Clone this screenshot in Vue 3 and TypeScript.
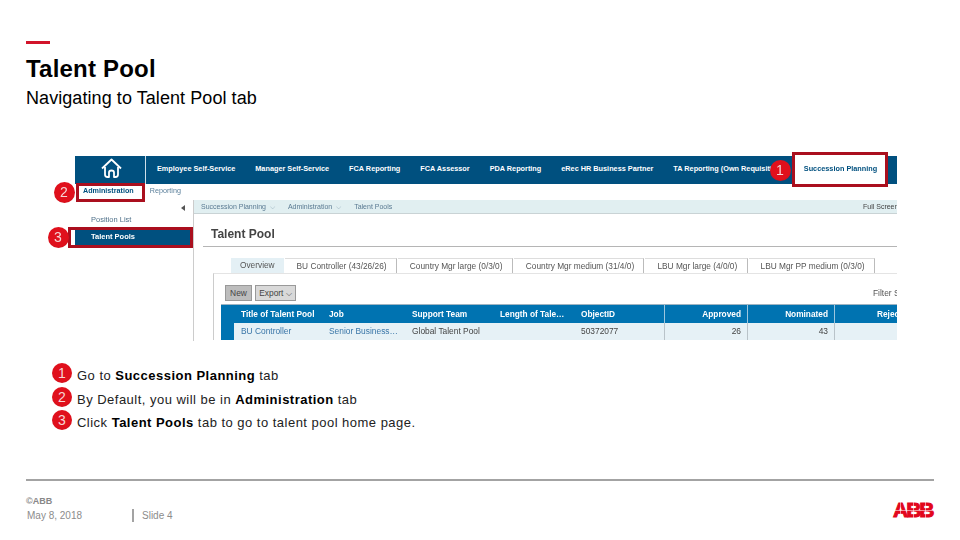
<script setup lang="ts">
const navItems: string[] = [
  'Employee Self-Service',
  'Manager Self-Service',
  'FCA Reporting',
  'FCA Assessor',
  'PDA Reporting',
  'eRec HR Business Partner',
  'TA Reporting (Own Requisiti',
]
const tabs: string[] = [
  'BU Controller (43/26/26)',
  'Country Mgr large (0/3/0)',
  'Country Mgr medium (31/4/0)',
  'LBU Mgr large (4/0/0)',
  'LBU Mgr PP medium (0/3/0)',
]
</script>

<template>
  <div class="slide">
    <header class="head">
      <div class="accent"></div>
      <h1 class="title">Talent Pool</h1>
      <p class="subtitle">Navigating to Talent Pool tab</p>
    </header>

    <section class="figure">
      <div class="shot">
        <nav class="nav">
          <div class="home">
            <svg width="21" height="20" viewBox="0 0 21 20" fill="none" stroke="#fff" stroke-width="1.8" stroke-linejoin="round">
              <path d="M1 10.5 L10.5 1.5 L20 10.5" />
              <path d="M4 9 V16.5 Q4 19 6.5 19 H8 V14.5 Q8 12.5 10.5 12.5 Q13 12.5 13 14.5 V19 H14.5 Q17 19 17 16.5 V9" />
            </svg>
          </div>
          <div class="nav-items">
            <span v-for="n in navItems" :key="n" class="nav-item">{{ n }}</span>
          </div>
          <div class="nav-active">Succession Planning</div>
        </nav>

        <div class="subnav">
          <span class="sub-active">Administration</span>
          <span class="sub-link">Reporting</span>
        </div>

        <div class="body">
          <aside class="side">
            <div class="collapse"></div>
            <div class="side-link">Position List</div>
            <div class="side-current">Talent Pools</div>
          </aside>

          <main class="content">
            <div class="crumbs">
              <span>Succession Planning &nbsp;⌵</span>
              <span>Administration &nbsp;⌵</span>
              <span>Talent Pools</span>
              <span class="full">Full Screen</span>
            </div>
            <div class="page">
              <h2 class="page-title">Talent Pool</h2>
              <div class="tabs">
                <span class="tab tab-first">Overview</span>
                <span v-for="t in tabs" :key="t" class="tab">{{ t }}</span>
              </div>
              <div class="panel">
                <div class="toolbar">
                  <span class="btn btn-new">New</span>
                  <span class="btn btn-export">Export ⌵</span>
                  <span class="filter">Filter Search</span>
                </div>
                <div class="table">
                  <div class="grid grid-head">
                    <span class="stub"></span>
                    <span>Title of Talent Pool</span>
                    <span>Job</span>
                    <span>Support Team</span>
                    <span class="len">Length of Tale…</span>
                    <span>ObjectID</span>
                    <span class="num div">Approved</span>
                    <span class="num div">Nominated</span>
                    <span class="num div rej">Rejected</span>
                  </div>
                  <div class="grid grid-row">
                    <span class="stub"></span>
                    <span class="lnk">BU Controller</span>
                    <span class="lnk">Senior Business…</span>
                    <span>Global Talent Pool</span>
                    <span></span>
                    <span>50372077</span>
                    <span class="num div">26</span>
                    <span class="num div">43</span>
                    <span class="div"></span>
                  </div>
                </div>
              </div>
            </div>
          </main>
        </div>
      </div>

      <div class="box box-1"></div>
      <div class="box box-2"></div>
      <div class="box box-3"></div>
      <span class="dot dot-1">1</span>
      <span class="dot dot-2">2</span>
      <span class="dot dot-3">3</span>
    </section>

    <ul class="legend">
      <li class="legend-row">
        <span class="dot-flow">1</span>
        <span class="legend-text">Go to <b>Succession Planning</b> tab</span>
      </li>
      <li class="legend-row">
        <span class="dot-flow">2</span>
        <span class="legend-text">By Default, you will be in <b>Administration</b> tab</span>
      </li>
      <li class="legend-row">
        <span class="dot-flow">3</span>
        <span class="legend-text">Click <b>Talent Pools</b> tab to go to talent pool home page.</span>
      </li>
    </ul>

    <footer class="foot">
      <div class="foot-left">
        <div class="copy">©ABB</div>
        <div class="foot-meta">
          <span class="date">May 8, 2018</span>
          <span class="slide-no">Slide 4</span>
        </div>
      </div>
      <div class="logo">
        <span class="logo-text">ABB</span>
        <i class="logo-h"></i>
        <i class="logo-v v1"></i>
        <i class="logo-v v2"></i>
        <i class="logo-v v3"></i>
      </div>
    </footer>
  </div>
</template>

<style>
html, body { margin: 0; background: #fff; }
</style>

<style scoped>
.slide {
  width: 960px;
  height: 540px;
  overflow: hidden;
  position: relative;
  box-sizing: border-box;
  padding: 41px 26px 0;
  font-family: "Liberation Sans", Arial, sans-serif;
  color: #000;
  background: #fff;
}
.accent { width: 24px; height: 3px; background: #d2142a; }
.title { margin: 11px 0 0; font-size: 24px; line-height: 28px; font-weight: 700; letter-spacing: 0.2px; }
.subtitle { margin: 5px 0 0; font-size: 18px; line-height: 20px; letter-spacing: 0.07px; }

.figure { position: relative; margin: 48px 0 0 49px; width: 822px; height: 185px; }
.shot {
  width: 822px; height: 185px; overflow: hidden; color: #444;
  font-size: 8px; filter: blur(0.4px);
}
.nav { height: 28px; background: #00507f; display: flex; align-items: center; color: #fff; font-weight: 700; font-size: 7.3px; }
.home { width: 70px; height: 24px; padding-bottom: 4px; border-right: 1px solid #cfdfe9; display: flex; align-items: center; justify-content: center; flex: none; }
.home svg { margin-left: 2px; }
.nav-items { display: flex; flex: none; width: 647px; padding-left: 11px; margin-top: -3px; box-sizing: border-box; overflow: hidden; white-space: nowrap; gap: 20px; }
.nav-active { background: #fff; color: #00507f; width: 95px; height: 28px; padding-bottom: 3px; box-sizing: border-box; display: flex; align-items: center; justify-content: center; flex: none; white-space: nowrap; }

.subnav { height: 16px; display: flex; align-items: flex-start; font-size: 7.2px; line-height: 14px; }
.sub-active { margin-left: 8px; color: #00507f; font-weight: 700; }
.sub-link { margin-left: 16px; color: #5a7f9a; }

.body { display: flex; height: 141px; }
.side { width: 118px; flex: none; border-right: 1px solid #ccc; font-size: 7.5px; }
.collapse { height: 14px; position: relative; }
.collapse::after { content: ""; position: absolute; right: 8px; top: 5px; border: 3px solid transparent; border-left: 0; border-right: 4px solid #555; }
.side-link { padding-left: 16px; height: 14px; line-height: 12px; color: #50718a; }
.side-current { width: 115px; height: 17px; line-height: 17px; padding-left: 16px; box-sizing: border-box; background: #00507f; color: #fff; font-weight: 700; }

.content { flex: 1; min-width: 0; }
.crumbs { height: 13px; background: #e1eff1; border-bottom: 1px solid #c9d3d5; display: flex; align-items: center; font-size: 7px; line-height: 10px; color: #5a7a92; padding-left: 7px; white-space: nowrap; }
.crumbs span { margin-right: 13px; }
.crumbs .full { margin: 0 0 0 auto; width: 34px; overflow: hidden; color: #444; }
.page { padding-left: 9px; }
.page-title { margin: 0; height: 33px; line-height: 41px; font-size: 12px; font-weight: 700; padding-left: 8px; color: #444; border-bottom: 1px solid #b5b5b5; box-sizing: border-box; }
.tabs { display: flex; margin: 11px 0 0 28px; height: 15px; font-size: 8.3px; align-items: stretch; white-space: nowrap; }
.tab { padding: 0 9.3px 0 12px; line-height: 14px; border-top: 1px solid #ddd; border-right: 1px solid #bbb; color: #555; margin-right: 1px; }
.tab-first { background: #e4f0f5; border: 0; padding: 0 9px; margin-right: 1px; }
.panel { margin-left: 10px; border-left: 1px solid #ccc; border-top: 1px solid #e4e4e4; padding: 11px 0 0 11px; position: relative; }
.toolbar { display: flex; gap: 3px; height: 16px; margin-bottom: 3px; font-size: 8.4px; position: relative; }
.btn { border: 1px solid #999; box-sizing: border-box; height: 16px; line-height: 14px; text-align: center; color: #444; }
.btn-new { width: 27px; background: #bdbdbd; }
.btn-export { width: 41px; background: #d9d9d9; }
.filter { position: absolute; right: 0; left: 648px; white-space: nowrap; overflow: hidden; color: #555; line-height: 16px; }
.table { margin-left: -4px; font-size: 8.3px; }
.grid { display: grid; grid-template-columns: 13px 88px 83px 88px 81px 90px 83px 87px 63px; white-space: nowrap; }
.grid > span { padding-left: 7px; box-sizing: border-box; overflow: hidden; }
.grid > .stub { padding: 0; }
.grid-head { height: 19px; line-height: 18px; background: #0073b1; color: #fff; font-weight: 700; border-top: 1px solid #9eb4c2; box-sizing: border-box; }
.grid-row { height: 17px; line-height: 16px; background: #e6f1f6; color: #444; font-size: 8.4px; }
.grid-row .stub { background: #0073b1; }
.lnk { color: #3a76a8; }
.num { text-align: right; padding-right: 6px; }
.div { border-left: 1px solid #b9c3c9; }
.grid-head .div { border-left-color: #9cc6de; }
.rej { padding-left: 42px !important; text-align: left; }
.len { padding-left: 7px !important; }

.box { position: absolute; box-sizing: border-box; border: 3px solid #aa0f1e; }
.box-1 { left: 717px; top: -4px; width: 96px; height: 35px; }
.box-2 { left: 1px; top: 27px; width: 69px; height: 19px; }
.box-3 { left: -7px; top: 71px; width: 125px; height: 21px; }
.dot {
  position: absolute; width: 21px; height: 21px; border-radius: 50%;
  background: radial-gradient(circle at 50% 45%, #e0101c 60%, #b80f18 100%);
  color: #f6d6d6; font-size: 14px; line-height: 21px; text-align: center;
}
.dot-1 { left: 694.5px; top: 3.5px; }
.dot-2 { left: -21.5px; top: 25.5px; }
.dot-3 { left: -27.5px; top: 70.5px; }

.legend { list-style: none; margin: 22px 0 0 26px; padding: 0; }
.legend-row { display: flex; height: 23.5px; }
.dot-flow {
  width: 20px; height: 20px; border-radius: 50%;
  background: radial-gradient(circle at 50% 45%, #e0101c 60%, #b80f18 100%);
  color: #f6d6d6;
  font-size: 14px; line-height: 20px; text-align: center; flex: none;
}
.legend-text { margin: 5px 0 0 5px; font-size: 13px; line-height: 16px; color: #222; letter-spacing: 0.48px; }
.legend-text b { color: #000; }

.foot {
  position: absolute; left: 26px; right: 26px; top: 479px; height: 50px;
  border-top: 2px solid #a3a3a3; display: flex; justify-content: space-between;
}
.foot-left { padding-top: 15px; color: #8c8c8c; }
.copy { font-size: 9px; line-height: 10px; font-weight: 700; color: #888; }
.foot-meta { display: flex; align-items: center; margin-top: 3px; font-size: 10px; line-height: 13px; }
.date { width: 108px; box-sizing: border-box; padding-left: 1px; border-right: 2px solid #a3a3a3; }
.slide-no { padding-left: 8px; }

.logo { position: relative; width: 40px; height: 16px; margin: 21px 1px 0 0; }
.logo-text { display: block; font-size: 21px; line-height: 16px; font-weight: 700; color: #e2061c; letter-spacing: -2px; -webkit-text-stroke: 1px #e2061c; }
.logo-h { position: absolute; left: 0; right: 0; top: 8px; height: 1px; background: #fff; opacity: .55; }
.logo-v { position: absolute; top: 0; bottom: 0; width: 1px; background: #fff; opacity: .55; }
.v1 { left: 7px; }
.v2 { left: 20px; }
.v3 { left: 32px; }
</style>
